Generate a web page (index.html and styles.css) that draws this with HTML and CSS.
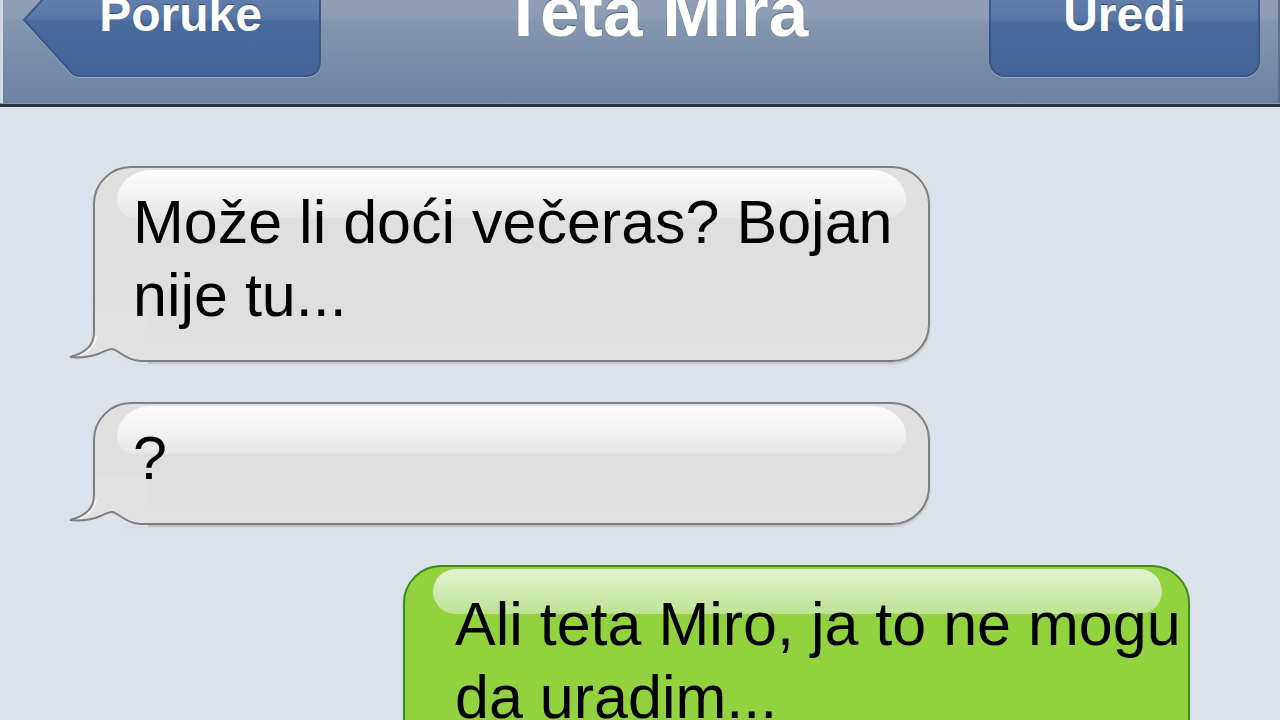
FILE: index.html
```html
<!DOCTYPE html>
<html lang="sr">
<head>
<meta charset="utf-8">
<title>Teta Mira</title>
<link rel="stylesheet" href="styles.css">
</head>
<body>
<div class="screen">
  <header class="navbar">
    <a class="nav-btn back">
      <svg class="back-shape" viewBox="0 0 299 114" width="299" height="114" aria-hidden="true">
        <defs>
          <linearGradient id="backGrad" x1="0" y1="0" x2="0" y2="114" gradientUnits="userSpaceOnUse">
            <stop offset="0" stop-color="#6f8cb8"/>
            <stop offset="0.49" stop-color="#5877a6"/>
            <stop offset="0.51" stop-color="#4a6a9c"/>
            <stop offset="1" stop-color="#43639a"/>
          </linearGradient>
        </defs>
        <path d="M2,57 L50,4 Q53,1 58,1 L283,1 Q298,1 298,16 L298,98 Q298,113 283,113 L58,113 Q53,113 50,110 Z" fill="url(#backGrad)" stroke="#3a5786" stroke-width="2"/>
      </svg>
      <span class="btn-label">Poruke</span>
    </a>
    <h1 class="title">Teta Mira</h1>
    <a class="nav-btn edit"><span class="btn-label">Uredi</span></a>
  </header>

  <main class="thread">
    <div class="bubble incoming">
      <svg class="tail" viewBox="0 0 80 82" width="80" height="82" aria-hidden="true">
        <path class="tail-erase" d="M0,82 L0,75 L2,75 C12,76 22,75 30,72 C36,70 40,67 44,67 C50,67 56,78 72,79 L80,79 L80,82 Z"/>
        <path class="tail-fill" d="M26,30 L26,50 C26,62 20,70 2,75 C12,76 22,75 30,72 C36,70 40,67 44,67 C50,67 56,78 72,79 L80,79 L80,30 Z"/>
        <path class="tail-shine" d="M28,54 C27,64 21,70 10,74"/>
        <path class="tail-line" d="M26,30 L26,50 C26,62 20,70 2,75 C12,76 22,75 30,72 C36,70 40,67 44,67 C50,67 56,78 72,79 L80,79"/>
      </svg>
      <p class="msg-text">Može li doći večeras? Bojan<br>nije tu...</p>
    </div>

    <div class="bubble incoming">
      <svg class="tail" viewBox="0 0 80 82" width="80" height="82" aria-hidden="true">
        <path class="tail-erase" d="M0,82 L0,75 L2,75 C12,76 22,75 30,72 C36,70 40,67 44,67 C50,67 56,78 72,79 L80,79 L80,82 Z"/>
        <path class="tail-fill" d="M26,30 L26,50 C26,62 20,70 2,75 C12,76 22,75 30,72 C36,70 40,67 44,67 C50,67 56,78 72,79 L80,79 L80,30 Z"/>
        <path class="tail-shine" d="M28,54 C27,64 21,70 10,74"/>
        <path class="tail-line" d="M26,30 L26,50 C26,62 20,70 2,75 C12,76 22,75 30,72 C36,70 40,67 44,67 C50,67 56,78 72,79 L80,79"/>
      </svg>
      <p class="msg-text">?</p>
    </div>

    <div class="bubble outgoing">
      <p class="msg-text">Ali teta Miro, ja to ne mogu<br>da uradim...</p>
    </div>
  </main>
</div>
</body>
</html>
```

FILE: styles.css
```css
* { box-sizing: border-box; }

html, body {
  margin: 0;
  padding: 0;
  width: 1280px;
  height: 720px;
  overflow: hidden;
}

body {
  font-family: "Liberation Sans", Arial, sans-serif;
  background: #dce2ec;
}

.screen {
  width: 1280px;
  height: 720px;
  overflow: hidden;
  background: #dce2ec;
}

/* ---------- navigation bar ---------- */
.navbar {
  height: 107px;
  display: flex;
  align-items: flex-start;
  padding: 0 20px 0 22px;
  background: linear-gradient(to bottom, #909fb7 0px, #8c9cb4 18px, #8496b0 22px, #6c83a3 100px);
  border-bottom: 3px solid #2c3138;
  box-shadow: inset 0 -1px 0 #8399b8, inset 3px 0 0 #d3d9e1, inset -2px 0 0 #5d6f89;
}

.nav-btn {
  height: 114px;
  margin-top: -37px;
  display: flex;
  align-items: center;
  justify-content: center;
  padding-bottom: 12px;
  color: #fff;
  font-weight: 700;
  font-size: 48px;
  text-decoration: none;
  text-shadow: 0 -1px 1px rgba(20, 35, 60, 0.55);
}

.back {
  position: relative;
  width: 299px;
  flex: none;
  padding-left: 18px;
}

.back-shape {
  position: absolute;
  left: 0;
  top: 0;
  filter: drop-shadow(0 1px 0 rgba(200, 212, 230, 0.45));
}

.btn-label {
  position: relative;
}

.edit {
  width: 271px;
  flex: none;
  border: 2px solid #3a5786;
  border-radius: 16px;
  background: linear-gradient(to bottom, #6f8cb8 0px, #5877a6 55px, #4a6a9c 58px, #43639a 100%);
  box-shadow: 0 1px 0 rgba(200, 212, 230, 0.45);
}

.title {
  flex: 1;
  margin: -23px 0 0;
  text-align: center;
  color: #fff;
  font-size: 71px;
  line-height: 70px;
  font-weight: 700;
  text-shadow: 0 -1px 1px rgba(20, 35, 60, 0.55);
}

/* ---------- message thread ---------- */
.thread {
  display: flex;
  flex-direction: column;
  align-items: flex-start;
  gap: 40px;
  padding-top: 59px;
}

.bubble {
  position: relative;
  border: 2px solid #7f7f7f;
  border-radius: 38px;
  font-size: 61px;
  line-height: 73px;
  color: #000;
  box-shadow: 0 2px 2px rgba(0, 0, 0, 0.16);
}

.bubble::before {
  content: "";
  position: absolute;
  top: 2px;
  left: 22px;
  right: 22px;
  height: 48px;
  border-radius: 34px 34px 18px 18px / 30px 30px 18px 18px;
  background: linear-gradient(to bottom, #fcfcfc 0%, #f0f0f0 60%, #e5e5e5 100%);
}

.incoming {
  margin-left: 93px;
  width: 837px;
  padding: 18px 26px 28px 38px;
  background: linear-gradient(to bottom, #e0e0e0 0%, #dedede 70%, #e2e2e2 100%);
}

.outgoing {
  margin-left: 403px;
  width: 787px;
  padding: 21px 6px 28px 50px;
  background: #91d23e;
  border-color: #3d8a22;
}

.outgoing::before {
  left: 28px;
  right: 26px;
  height: 45px;
  border-radius: 26px;
  background: linear-gradient(to bottom, #e2f2d2, #bde394);
}

.msg-text {
  position: relative;
  margin: 0;
  white-space: nowrap;
}

.tail {
  position: absolute;
  left: -27px;
  bottom: -4px;
  overflow: visible;
}

.tail-erase { fill: #dce2ec; }
.tail-fill { fill: #e1e1e1; }
.tail-shine {
  fill: none;
  stroke: #f7f7f7;
  stroke-width: 2;
}
.tail-line {
  fill: none;
  stroke: #7f7f7f;
  stroke-width: 2;
}
```
